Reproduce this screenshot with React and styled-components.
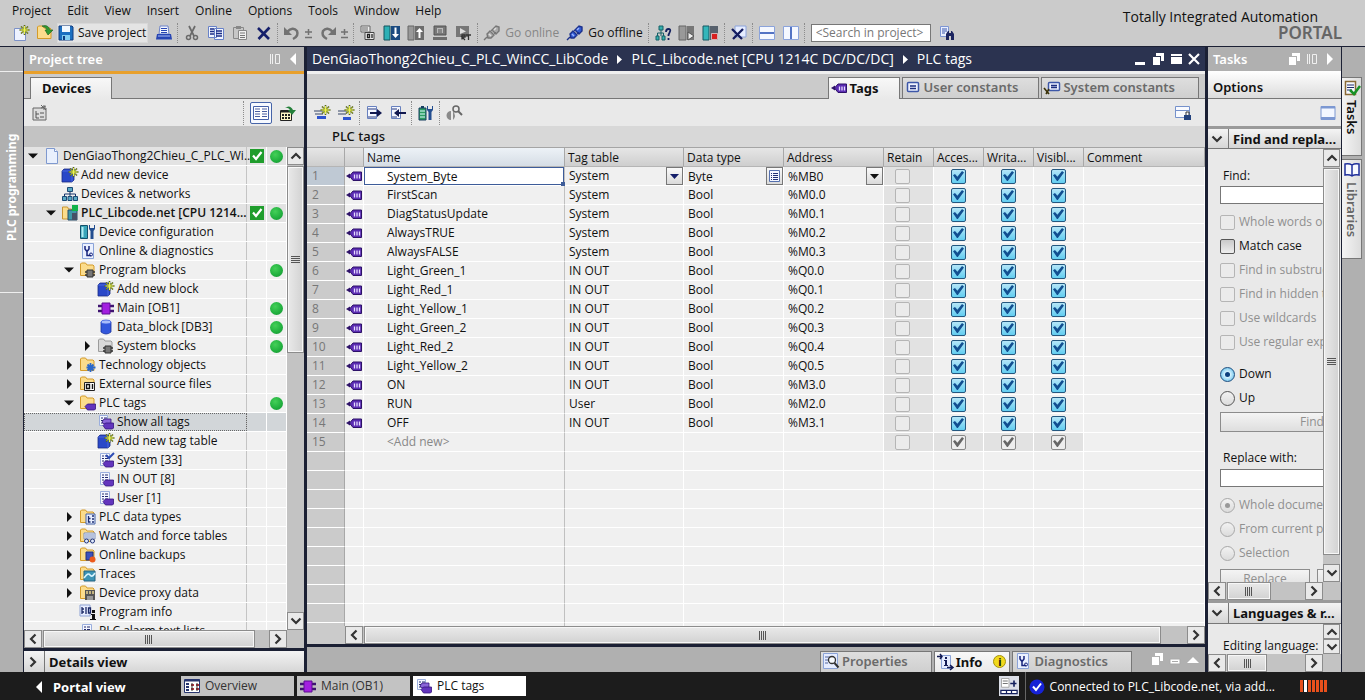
import React from 'react'
import styled, { createGlobalStyle, css } from 'styled-components'

const GlobalStyle = createGlobalStyle`
*{ box-sizing:border-box; }
html, body, #root{ height:100%; }
body{
  margin:0;
  overflow:hidden;
  font-family:"Open Sans","Noto Sans",sans-serif;
  font-size:12px;
  line-height:18px;
  color:#111;
  background:#cbcbcb;
}
button, input, select{ font:inherit; color:inherit; }
`

const metal = 'linear-gradient(#f4f4f4,#e6e6e6 45%,#d6d6d6)'
const headingFont = '"Noto Sans","Open Sans",sans-serif'

// page frame
const Page = styled.div`
display:flex;
flex-direction:column;
height:100vh;
`
const Workspace = styled.main`
flex:1;
min-height:0;
display:flex;
border-top:1px solid #1b2034;
`
const PlainButton = styled.button`
display:flex;
align-items:center;
gap:5px;
padding:0;
border:none;
background:none;
white-space:nowrap;
color:${p => (p.$muted ? '#868686' : 'inherit')};
`

// header: menu, main toolbar and brand
const Header = styled.header`
display:flex;
justify-content:space-between;
height:46px;
background:#cbcbcb;
`
const Menu = styled.nav`
display:flex;
gap:16px;
height:21px;
padding-left:12px;
`
const Toolbar = styled.div`
display:flex;
align-items:center;
gap:8px;
height:25px;
padding:0 0 2px 13px;
`
const Split = styled.span`
width:1px;
height:${p => p.$h || 20}px;
margin:0 -2px 0 -3px;
border-left:1px dotted #8c8c8c;
`
const SaveButton = styled(PlainButton)`
height:20px;
margin-left:-4px;
padding:0 1px 0 0;
gap:4px;
background:#e4e4e4;
border:1px solid #d8d8d8;
`
const SearchBox = styled.input`
width:120px;
height:18px;
padding:0 4px;
border:1px solid #777;
background:#fff;
&::placeholder{ color:#777; opacity:1; }
`
const Brand = styled.div`
display:flex;
flex-direction:column;
align-items:flex-end;
padding:8px 23px 0 0;
`
const BrandName = styled.span`
padding-right:24px;
font-size:14px;
line-height:17px;
font-weight:500;
`
const BrandSub = styled.span`
font-family:${headingFont};
font-size:17px;
line-height:15px;
font-weight:600;
color:#666;
`

// side rails
const LeftRail = styled.aside`
width:24px;
background:#b0b0b0;
border-right:1px solid #1b2034;
padding-top:24px;
`
const LeftRailTab = styled.button`
display:flex;
align-items:center;
justify-content:center;
width:23px;
height:222px;
padding:0 0 10px;
border:solid #eee;
border-width:1px 0;
background:none;
color:#fff;
font-family:${headingFont};
font-weight:700;
writing-mode:vertical-rl;
transform:rotate(180deg);
`
const RightRail = styled.aside`
width:24px;
padding-top:30px;
display:flex;
flex-direction:column;
align-items:flex-start;
gap:3px;
background:#b0b0b0;
border-left:1px solid #1b2034;
`
const RailTab = styled.button`
display:flex;
align-items:center;
gap:4px;
width:20px;
height:${p => p.$h}px;
padding:2px 0;
border:1px solid #777;
border-left:none;
background:linear-gradient(90deg,#f4f4f4,#dcdcdc);
font-family:${headingFont};
font-size:13px;
font-weight:600;
writing-mode:vertical-rl;
color:${p => (p.$active ? '#111' : '#666')};
`

// panels
const TreePanel = styled.section`
width:280px;
display:flex;
flex-direction:column;
background:#c3c3c3;
`
const Gutter = styled.div`
width:3px;
background:#1b2034;
`
const EditorPanel = styled.section`
flex:1;
min-width:0;
display:flex;
flex-direction:column;
background:#f0f0f0;
`
const TaskPanel = styled.section`
width:133px;
display:flex;
flex-direction:column;
background:#e9e9e9;
`
const TitleBar = styled.div`
display:flex;
align-items:center;
gap:2px;
height:${p => (p.$accent ? 27 : 24)}px;
padding:0 3px 0 5px;
color:#fff;
font-family:${headingFont};
font-size:13px;
font-weight:600;
white-space:nowrap;
background:${p => (p.$dark ? '#2b3350' : '#b0b0b0')};
border-bottom:${p => (p.$accent ? '3px solid #e8a02c' : 'none')};
`
const Spacer = styled.span`
flex:1;
`
const TabStrip = styled.div`
display:flex;
align-items:flex-end;
justify-content:${p => (p.$end ? 'flex-end' : 'flex-start')};
gap:2px;
height:${p => (p.$end ? 28 : 25)}px;
padding:0 6px;
background:#cbcbcb;
border-top:${p => (p.$end ? '3px solid #efefef' : 'none')};
border-bottom:1px solid #777;
`
const Tab = styled.button`
display:flex;
align-items:center;
gap:3px;
height:${p => (p.$active ? 22 : 21)}px;
margin-bottom:${p => (p.$active ? -1 : 0)}px;
padding:0 ${p => p.$pad || 20}px 2px ${p => p.$left || 2}px;
border:1px solid #777;
border-bottom:none;
background:${p => (p.$active ? 'linear-gradient(#f8f8f8,#e9e9e9)' : 'linear-gradient(#dedede,#cfcfcf)')};
color:${p => (p.$active ? '#111' : '#6a6a6a')};
font-family:${headingFont};
font-size:13px;
font-weight:${p => (p.$active ? 700 : 600)};
white-space:nowrap;
`
const PanelTools = styled.div`
display:flex;
align-items:center;
gap:8px;
height:27px;
padding:0 ${p => p.$pad || 8}px;
background:#e9e9e9;
`
const ToggleFrame = styled(PlainButton)`
padding:2px;
border:1px solid #4664a8;
border-radius:2px;
background:#f6f9ff;
`
const Caption = styled.h2`
margin:0;
height:22px;
padding-left:25px;
font-family:${headingFont};
font-size:13px;
line-height:20px;
font-weight:500;
background:#d8d8d8;
border-bottom:1px solid #a5a5a5;
`
const SectionHead = styled.button`
display:flex;
align-items:center;
width:100%;
height:${p => p.$h || 21}px;
flex-shrink:0;
padding:0;
border:none;
border-top:${p => (p.$ruled ? '3px solid #9a9a9a' : 'none')};
border-bottom:${p => (p.$ruled ? '1px solid #777' : 'none')};
background:${metal};
font-family:${headingFont};
font-size:13px;
font-weight:700;
white-space:nowrap;
`
const SectionMark = styled.span`
display:flex;
align-items:center;
justify-content:center;
width:21px;
height:100%;
padding-right:2px;
margin-right:4px;
border-right:1px solid #777;
`

// scroll bars
const Bar = styled.div`
display:flex;
flex-direction:${p => (p.$h ? 'row' : 'column')};
${p => (p.$h ? 'height:18px;' : 'width:17px;')}
flex-shrink:0;
min-width:0;
min-height:0;
background:#c3c3c3;
`
const BarButton = styled.button`
display:flex;
align-items:center;
justify-content:center;
flex:0 1 18px;
${p => (p.$h ? 'height:18px;' : 'width:17px;')}
min-width:0;
min-height:0;
padding:0;
border:1px solid #8c8c8c;
background:#e9e9e9;
`
const BarTrack = styled.div`
flex:1;
min-height:0;
padding:${p => (p.$h ? '0 1px' : '1px 0')};
`
const BarThumb = styled.div`
display:flex;
align-items:center;
justify-content:center;
width:100%;
height:100%;
border:1px solid #8c8c8c;
box-shadow:inset 0 0 0 1px #f7f7f7;
background:${p => (p.$h ? 'linear-gradient(#e9e9e9,#d2d2d2)' : 'linear-gradient(90deg,#e9e9e9,#d2d2d2)')};
`

const Chevron = ({ dir, size = 12 }) => {
    const turn = { up: 0, right: 90, down: 180, left: 270 }[dir]
    return (
        <svg width={size} height={size} viewBox="0 0 12 12">
            <path d="M1.5 8.5L6 4l4.500 4.500" transform={`rotate(${turn} 6 6)`} fill="none" stroke="#333" strokeWidth="2.200" />
        </svg>
    )
}

const Scrollbar = ({ horizontal, thumb, label }) => (
    <Bar $h={horizontal}>
        <BarButton $h={horizontal} aria-label={`${label} back`}>
            <Chevron dir={horizontal ? 'left' : 'up'} />
        </BarButton>
        {thumb > 0 && (
            <BarTrack $h={horizontal}>
                <BarThumb $h={horizontal} style={horizontal ? { width: `${thumb}%` } : { height: `${thumb}%` }}>
                    <svg width="9" height="9" viewBox="0 0 9 9">
                        <path d={horizontal ? 'M1.500 0v9M3.500 0v9M5.500 0v9M7.500 0v9' : 'M0 1.500h9M0 3.500h9M0 5.500h9M0 7.500h9'} stroke="#555" />
                    </svg>
                </BarThumb>
            </BarTrack>
        )}
        <BarButton $h={horizontal} aria-label={`${label} forward`}>
            <Chevron dir={horizontal ? 'right' : 'down'} />
        </BarButton>
    </Bar>
)

// icon parts
const Folder = () => (
    <path d="M.5 13.500V2l1-1h4l1.500 2h6l1 1v9.500z" fill="#fbdc8c" stroke="#d49b2a" />
)
const Sheet = () => (
    <>
        <path d="M2.500 1.500h9v12h-9z" fill="#f4f7ff" stroke="#9aaedd" />
        <path d="M4 4h2M4 6.500h2M4 9h2M7 4h3M7 6.500h3M7 9h3" stroke="#232a6e" />
    </>
)
const Star = () => (
    <>
        <path d="M11.500 0v10M6.500 5h10M8 1.500l7 7M15 1.500l-7 7" stroke="#57661a" strokeWidth="1.600" />
        <path d="M11.500 1v8M7.500 5h8M9 2.500l5 5M14 2.500l-5 5" stroke="#eef552" />
    </>
)
const SmallTag = () => (
    <path d="M5 11.500L7.500 9h8v5l-1 1h-7z" fill="#6335bd" stroke="#35147d" strokeWidth=".8" />
)
const Binoculars = () => (
    <path d="M7 15V9l2-3h1v2h2V6h1l2 3v6h-3v-4h-2v4z" fill="#1c2560" />
)
const Wrench = () => (
    <path d="M9 1v4l1.500 2v8h3V7L15 5V1h-1v3h-4V1z" fill="#234e90" />
)
const Chip = ({ x = 6, y = 7 }) => (
    <g transform={`translate(${x} ${y})`}>
        <path d="M0 2h10M0 5h10" stroke="#333" strokeWidth="1.500" />
        <path d="M2 0h6v7H2z" fill="#777" stroke="#333" />
    </g>
)
const Steth = () => (
    <>
        <path d="M2.500.500h11v15h-11z" fill="#eaf0ff" stroke="#8ba3d8" />
        <path d="M5 3v3l2 2.500L9 6V3M7 8v4.500h4" fill="none" stroke="#17237c" strokeWidth="1.500" />
        <circle cx="11" cy="11.500" r="1.500" fill="none" stroke="#17237c" />
    </>
)

const shapes = {
    newProject: <><path d="M1.500 3.500h9l2 3v9h-11z" fill="#eef2ff" stroke="#7d92c8" /><Star /></>,
    openProject: <><Folder /><path d="M5 1q6-2 8 4h3l-5 5-3-5h2Q9 2 5 1z" fill="#2f9a32" stroke="#17601a" strokeWidth=".6" /></>,
    save: <><path d="M1 1h13l1 1v13H1z" fill="#1c6fc0" stroke="#123d80" /><path d="M4 1h8v6H4z" fill="#f1f8ff" /><path d="M4 10h8v5H4z" fill="#83cdf0" /><path d="M5 11h2v4H5z" fill="#123d80" /></>,
    print: <><path d="M4 1h8l1 8H3z" fill="#f4f7ff" stroke="#6d83c9" /><path d="M5 3.500h6M5 5.500h6M5 7.500h6" stroke="#2745b3" /><path d="M1 9h14l1 5.500H0z" fill="#2745b3" /><path d="M2 11h12" stroke="#a9bcf5" /></>,
    cut: <><path d="M5 1l5 10M11 1L6 11" stroke="#6a6a6a" strokeWidth="1.700" /><circle cx="4.500" cy="12.500" r="2" fill="none" stroke="#6a6a6a" strokeWidth="1.500" /><circle cx="11.500" cy="12.500" r="2" fill="none" stroke="#6a6a6a" strokeWidth="1.500" /></>,
    copy: <><path d="M.500 1.500h8v11h-8zM6.500 3.500h9v11h-9z" fill="#f1f5ff" stroke="#6882c8" /><path d="M2 4h4M2 6.500h4M2 9h4M8 6h6M8 8.500h6M8 11h6" stroke="#1b2d87" strokeWidth="1.300" /></>,
    paste: <><path d="M1.500 2.500h10v11h-10z" fill="#c7c7c7" stroke="#888" /><path d="M4 1h5v3H4z" fill="#888" /><path d="M6.500 5.500h8v9h-8z" fill="#f1f1f1" stroke="#888" /><path d="M8 8h5M8 10.500h5M8 12.500h5" stroke="#777" /></>,
    cross: <path d="M2 3l11 11M13.500 2.500L2.500 14" stroke="#151f6b" strokeWidth="2.600" />,
    undo: <><path d="M3 7q6-6 10-1 2 5-4 8" fill="none" stroke="#727272" strokeWidth="2.500" /><path d="M0 2v8h8z" fill="#727272" /></>,
    redo: <><path d="M13 7Q7 1 3 6q-2 5 4 8" fill="none" stroke="#727272" strokeWidth="2.500" /><path d="M16 2v8H8z" fill="#727272" /></>,
    compile: <><path d="M1 1h9v6H1z" fill="#eee" stroke="#666" /><path d="M2 3h6M2 5h6" stroke="#666" /><path d="M5 7.500h9v7H5z" fill="#eee" stroke="#444" /><path d="M7.500 9.500h2v3h-2zM12 9v4" fill="none" stroke="#222" strokeWidth="1.300" /></>,
    download: <><path d="M0 1h6v14H0z" fill="#2db0b5" stroke="#14525d" /><path d="M7 1h9v14H7z" fill="#1b4a80" /><path d="M10.500 2.500h2V9H15l-3.500 4L8 9h2.500z" fill="#fff" /></>,
    upload: <><path d="M0 1h6v14H0z" fill="#999" stroke="#666" /><path d="M7 1h9v14H7z" fill="#6c6c6c" /><path d="M10.500 13h2V7H15l-3.500-4L8 7h2.500z" fill="#fff" /></>,
    simulate: <><path d="M2 1h12v9H2z" fill="#777" stroke="#555" /><path d="M5 3h6v5H5z" fill="#bbb" /><path d="M6 5h4M6 7h4" stroke="#555" /><path d="M1 12h14v3H1z" fill="#6e6e6e" /></>,
    runtime: <><path d="M0 1h13v11H0z" fill="#777" /><path d="M4 3l6 3.500L4 9z" fill="#ddd" /><path d="M6 14.500V10h3v2H6l3 3M10 10h5M12.500 10v5" fill="none" stroke="#333" strokeWidth="1.300" /></>,
    plug: <><path d="M0 15l3-3M3 9l3-3 4 4-3 3H4zM8 5l4-4 3 1v4l-3 3z" fill="#315bd2" stroke="#1c318c" strokeWidth="1.400" /><path d="M5 9l2 2M10 5l2-2" stroke="#9cb4ff" strokeWidth="1.500" /><path d="M6 7l3-3M9 10l3-3" stroke="#1c318c" /></>,
    plugOff: <><path d="M0 15l3-3M3 9l3-3 4 4-3 3H4zM8 5l4-4 3 1v4l-3 3z" fill="#aaa" stroke="#777" strokeWidth="1.400" /><path d="M5 9l2 2M10 5l2-2" stroke="#ddd" strokeWidth="1.500" /><path d="M6 7l3-3M9 10l3-3" stroke="#777" /></>,
    access: <><path d="M4 1h4v4H4zM1 11h3v4H1zM7 11h3v4H7z" fill="#35b0ae" stroke="#176067" /><path d="M6 5v6M2.500 11V8h6v3" fill="none" stroke="#176067" /><path d="M11 7q0-3 2.500-3T15 6.500 13.500 10v1M13.500 13v2" fill="none" stroke="#14205e" strokeWidth="1.800" /></>,
    startCpu: <><path d="M0 1h7v14H0z" fill="#999" stroke="#666" /><path d="M8 1h7v14H8z" fill="#777" /><path d="M9 7l6 4-6 4z" fill="#eee" stroke="#555" /></>,
    stopCpu: <><path d="M0 1h6v14H0z" fill="#34b6ba" stroke="#145862" /><path d="M7 1h8v14H7z" fill="#57616d" /><path d="M8.500 8.500h6v6h-6z" fill="#d81f1f" stroke="#fff" strokeWidth=".6" /></>,
    crossRef: <><path d="M4 1h11v11H4z" fill="#e5ecff" stroke="#8ca3db" /><path d="M1 4l10 10M12 4L2 14" stroke="#131b5f" strokeWidth="2.300" /></>,
    splitH: <><path d="M.500 1.500h15v13H.500z" fill="#f5f8ff" stroke="#8ba3db" /><path d="M1 8h14" stroke="#5373c4" strokeWidth="2" /></>,
    splitV: <><path d="M.500 1.500h15v13H.500z" fill="#f5f8ff" stroke="#8ba3db" /><path d="M8 2v12" stroke="#5373c4" strokeWidth="2" /></>,
    searchProject: <><path d="M1.500 1.500h8v10h-8z" fill="#eaf0ff" stroke="#7d95d4" /><path d="M3 4h5M3 6h5M3 8h3" stroke="#3b57ac" /><Binoculars /></>,
    treeNew: <><path d="M1 3h13v12H1z" fill="#ddd" stroke="#666" /><path d="M4 6v7h3M4 9h3M8 8h4M8 12h4" stroke="#555" fill="none" /><path d="M9 3l5-2M12 0v5M9 0l5 5" stroke="#666" /></>,
    listView: <><path d="M.500 1.500h15v13H.500z" fill="#fff" stroke="#4560a8" /><path d="M2 4h5M2 6.500h5M2 9h5M2 11.500h5M9 4h5M9 6.500h5M9 9h5M9 11.500h5" stroke="#4a5ea0" /></>,
    exportView: <><path d="M.500 5.500h11v10H.500z" fill="#fff6c5" stroke="#222" /><path d="M1 6.500h10" stroke="#222" strokeWidth="2" /><path d="M2 9h2v2H2zM5 9h2v2H5zM8 9h2v2H8zM2 12h2v2H2zM5 12h2v2H5zM8 12h2v2H8z" fill="#222" /><path d="M5 3q5-4 8 2h3l-4 5-4-5h2Q8 2 5 3z" fill="#25803a" /></>,
    project: <><path d="M2.500.500h8l3 3v12h-11z" fill="#e9f0fd" stroke="#7f99cf" /><path d="M10.500.500v3h3" fill="#fff" stroke="#7f99cf" /></>,
    addNew: <><path d="M0 4l2-2h10v11l-2 2H0z" fill="#2a48c8" stroke="#1b2b85" strokeWidth=".8" /><path d="M0 4h10v11M10 4l2-2" fill="none" stroke="#5a78e8" strokeWidth=".7" /><Star /></>,
    network: <><path d="M5.500 1.500h5v4h-5zM.500 10.500h4v4h-4zM6 10.500h4v4H6zM11.500 10.500h4v4h-4z" fill="#5ba9c4" stroke="#1b4a76" /><path d="M8 6v4M2.500 10V8h11v2" fill="none" stroke="#17346b" /></>,
    plc: <><path d="M.500 14V2h5l1 2h3v10z" fill="#fbdc8c" stroke="#c99531" /><path d="M6 5h9v10H6z" fill="#3d97a7" stroke="#284d68" /><path d="M10 8h5v7h-5z" fill="#455066" /><path d="M10 0h6v6h-6z" fill="#12b24a" /></>,
    deviceConfig: <><path d="M.500 1.500h7v13h-7z" fill="#39a5b9" stroke="#14516b" /><path d="M2.500 3v10" stroke="#b4edf2" strokeWidth="2" /><Wrench /></>,
    steth: <Steth />,
    blocks: <><Folder /><Chip x={5} y={8} /></>,
    systemBlocks: <><path d="M.500 13.500V2l1-1h4l1.500 2h6l1 1v9.500z" fill="#d9d9d9" stroke="#9c9c9c" /><Chip x={5} y={8} /></>,
    ob: <><path d="M0 6h16M0 11h16" stroke="#3e1470" strokeWidth="2.400" /><path d="M4 3h8v11H4z" fill="#a31fe0" stroke="#5c0f92" /></>,
    db: <><path d="M3 3v10q5 4 10 0V3z" fill="#3357dc" stroke="#1b33a0" strokeWidth=".8" /><ellipse cx="8" cy="3" rx="5" ry="2" fill="#a9bcfa" stroke="#3357dc" strokeWidth=".8" /></>,
    tech: <><Folder /><path d="M10.500 6v9M6.500 10.500h9M7.500 7.500l6 6M13.500 7.500l-6 6" stroke="#2a68cb" strokeWidth="1.800" /></>,
    source: <><Folder /><path d="M4.500 6.500h10v8h-10z" fill="#fff" stroke="#222" /><path d="M6.500 8.500h3v4h-3zM12.500 8v5" fill="none" stroke="#111" strokeWidth="1.400" /></>,
    tagsFolder: <><Folder /><SmallTag /></>,
    allTags: <><path d="M1.500 1.500h8v10h-8z" fill="#f4f7ff" stroke="#9aaedd" /><path d="M3 4h2M3 6.500h2M3 9h2M6 4h3" stroke="#232a6e" /><path d="M4 8l2-3h7v5H6z" fill="#8a65d8" stroke="#35147d" strokeWidth=".8" /><SmallTag /></>,
    tagTable: <><Sheet /><SmallTag /></>,
    tagTableMain: <><Sheet /><path d="M8 3l3 3 5-5" fill="none" stroke="#2d4bb4" strokeWidth="2" /><SmallTag /></>,
    dataTypes: <><Folder /><path d="M6 5h9v10H6z" fill="#e8efff" stroke="#4562a6" /><path d="M8.500 7v6h2M8.500 9.500h2M12 7h2M12 10h2M12 13h2" fill="none" stroke="#1c2d70" strokeWidth="1.300" /></>,
    watch: <><Folder /><path d="M4 5h11v6H4z" fill="#f0f4ff" stroke="#7d8fbb" /><path d="M5 7h9M5 9h9" stroke="#7d8fbb" /><circle cx="6.500" cy="13" r="2" fill="#dfeaff" stroke="#23367d" /><circle cx="12.500" cy="13" r="2" fill="#dfeaff" stroke="#23367d" /></>,
    backup: <><Folder /><path d="M6 5h7v8H6z" fill="#3b50be" stroke="#222f7a" /><circle cx="12.500" cy="12.500" r="3" fill="#ec5a1c" /></>,
    traces: <><Folder /><path d="M4 5h11v10H4z" fill="#3b93b5" stroke="#256281" /><path d="M4 12q4-6 6-3t5-2" fill="none" stroke="#d6f4ff" strokeWidth="1.500" /></>,
    proxy: <><Folder /><path d="M5 5h10v10H5z" fill="#555" /><path d="M7 6v3M10 6v3M13 6v3" stroke="#e7d28f" strokeWidth="1.500" /><path d="M7 11h6v4H7z" fill="#999" /></>,
    programInfo: <><path d="M0 1h10v11H0z" fill="#e7edff" stroke="#8fa3d4" /><path d="M2 3v7M2 5h2M2 8h2M6 3v7M8.500 4h2v5h-2z" fill="none" stroke="#1b2866" strokeWidth="1.300" /><path d="M12 6h3v3h-3zM11 10h4v5h1v1h-6v-1h2v-4h-1z" fill="#111" /></>,
    tag: <><path d="M3.500 8L7 4h8.500v8.500H7z" fill="#5b2cb3" stroke="#2d1168" /><path d="M0 8l4-2.500v5z" fill="#2d1168" /><path d="M8.500 6.500v4M11 6.500v4M13.500 6.500v4" stroke="#e6dcff" strokeWidth="1.300" /></>,
    userConst: <><rect x="2.500" y="3.500" width="11" height="9" rx="1" fill="#eef2ff" stroke="#3d57a8" strokeWidth="1.500" /><path d="M5 7h6M5 9.500h6" stroke="#1d2f80" strokeWidth="1.400" /></>,
    systemConst: <><rect x="4.500" y="3.500" width="11" height="8" rx="1" fill="#eef2ff" stroke="#3d57a8" strokeWidth="1.500" /><path d="M7 6.500h6M7 8.500h6" stroke="#1d2f80" strokeWidth="1.400" /><path d="M0 9l5 6M5 10l-3 5" stroke="#3a3108" strokeWidth="1.600" /></>,
    rowInsert: <><path d="M0 6h9M1 9h8" stroke="#8f97a8" strokeWidth="2" /><path d="M3 12.500h9" stroke="#2f55cf" strokeWidth="3" /><Star /></>,
    rowAdd: <><path d="M0 6h9M0 9h8" stroke="#8f97a8" strokeWidth="2" /><path d="M5 13.500h8" stroke="#2f55cf" strokeWidth="3" /><Star /></>,
    exportTags: <><path d="M1.500 1.500h9v12h-9z" fill="#f4f7ff" stroke="#6881bf" /><path d="M2 4h8M2 12h8" stroke="#27397f" /><path d="M4 8h8" stroke="#11184f" strokeWidth="2" /><path d="M11 4l5 4-5 4z" fill="#11184f" /></>,
    importTags: <><path d="M1.500 1.500h9v12h-9z" fill="#f4f7ff" stroke="#6881bf" /><path d="M2 4h5M2 12h5" stroke="#27397f" /><path d="M8 8h8" stroke="#11184f" strokeWidth="2" /><path d="M9 4L4 8l5 4z" fill="#11184f" /></>,
    monitor: <><path d="M1 3h7v12H1z" fill="#2c9d62" stroke="#173f61" /><path d="M3 1h3v2H3z" fill="#173f61" /><path d="M2 6h5M2 9h5M2 12h5" stroke="#dff" /><Wrench /></>,
    observe: <><circle cx="10" cy="4" r="3" fill="none" stroke="#666" strokeWidth="1.500" /><path d="M12 6l4 4" stroke="#666" strokeWidth="2" /><path d="M5 6a4 4 0 000 9zM7 6v9q4-4 0-9" fill="#8b8b8b" /></>,
    lockPane: <><path d="M.500 1.500h14v11H.500z" fill="#f8faff" stroke="#7591cb" /><path d="M1 5.500h13" stroke="#7591cb" /><path d="M9 10h7v5H9z" fill="#23427e" /><path d="M11 10V7h3v3" fill="none" stroke="#333" /></>,
    pane: <><path d="M1 1.500h14v13H1z" fill="#f3f7ff" stroke="#7c98d2" /><path d="M1 2.500h14M1 13h14" stroke="#7c98d2" strokeWidth="2" /></>,
    taskTab: <><path d="M1.500 1.500h10v13h-10z" fill="#f6f8ff" stroke="#8a6a36" strokeWidth="1.500" /><path d="M3 5h7M3 7.500h7M3 10h5" stroke="#202b68" strokeWidth="1.200" /><path d="M6 10l4 4 6-8" fill="none" stroke="#189226" strokeWidth="2.500" /></>,
    book: <path d="M1 2q4-1 7 1 3-2 7-1v11q-4-1-7 1-3-2-7-1zM8 3v11" fill="#f7f9ff" stroke="#1f2f9b" strokeWidth="1.500" />,
    properties: <><path d="M.500.500h14v15H.500z" fill="#e5ecff" stroke="#8ba3d8" /><path d="M2 4h5M2 7h3M2 10h3" stroke="#55679d" /><circle cx="9" cy="7" r="3.500" fill="#f8fbff" stroke="#333" strokeWidth="1.300" /><path d="M11.500 10l4 4.500" stroke="#333" strokeWidth="2" /></>,
    info: <><path d="M4.500 1.500h9v13h-9z" fill="#e5ecff" stroke="#8ba3d8" /><path d="M0 2.500h5M3 0l2 2.500L3 5M10 13.500h6M13 11l3 2.500-3 2.500" fill="none" stroke="#131b55" strokeWidth="1.500" /><path d="M8 3h2v2H8zM7 6h3v5h1v1H7v-1h1V7H7z" fill="#131b55" /></>,
    overview: <><path d="M.500 1.500h15v13H.500z" fill="#fff" stroke="#27356e" /><path d="M1 2.500h15M2 6h3M2 9h3M2 12h3" stroke="#27356e" strokeWidth="2" /><path d="M7 7h3M12 7h3M7 11h3M12 11h3" stroke="#b5323d" strokeWidth="2" /><path d="M8 5v8M13 5v8" stroke="#333" /></>,
    netStatus: <><path d="M0 0h16v16H0z" fill="#dcdfe8" /><path d="M2 2h6v7H2z" fill="#fff" stroke="#aaa" strokeWidth=".8" /><path d="M3 4h4M3 6h4" stroke="#777" strokeWidth=".8" /><path d="M9 6h5M12 3.500v5" stroke="#14205e" strokeWidth="1.300" /><path d="M1.500 11.500h13v2.500h-13zM6 11.500v2.500M10 11.500v2.500" fill="#fff" stroke="#14205e" /></>,
    okBlue: <><circle cx="8" cy="8" r="7.500" fill="#1622d6" /><path d="M4 7.500l3 3.500 5-6.500" fill="none" stroke="#fff" strokeWidth="2" /></>,
    minimize: <path d="M3 11h10v3H3z" fill="#fff" />,
    smallBar: <path d="M3 8h10v5H3zM5 10.500h6" fill="#fff" stroke="#aaa" />,
    restore: <><path d="M6 2h8v8h-3V5H6z" fill="#fff" /><path d="M3 6h7v8H3z" fill="#fff" /></>,
    maximize: <path d="M3 3h11v2H3zM3 6h11v7H3z" fill="#fff" />,
    close: <path d="M3 3l10 10M13 3L3 13" stroke="#fff" strokeWidth="2.200" />,
    columns: <path d="M3.500 3v10M5.500 3v10M8.500 3.500h4v9h-4z" fill="none" stroke="#f0f0f0" />,
    triLeft: <path d="M11 2v12L5 8z" fill="#fff" />,
    triRight: <path d="M5 2v12l6-6z" fill="#fff" />,
    triUp: <path d="M2 12h12L8 6z" fill="#fff" />,
}

const Icon = ({ name, size = 16 }) => (
    <svg width={size} height={size} viewBox="0 0 16 16" aria-hidden="true" overflow="visible">
        {shapes[name]}
    </svg>
)

const IconButton = ({ name, label }) => (
    <PlainButton aria-label={label || name}><Icon name={name} /></PlainButton>
)

// project tree
const TreeArea = styled.div`
flex:1;
min-height:0;
margin-top:21px;
display:flex;
`
const TreeList = styled.ul`
flex:1;
min-width:0;
margin:0;
padding:0;
list-style:none;
overflow:hidden;
background:#f0f0f0;
`
const TreeRow = styled.li`
display:grid;
grid-template-columns:minmax(0,1fr) 20px 20px;
height:19px;
background:${p => (p.$selected ? '#d2d6d9' : p.$root ? '#e3e3e3' : '#f0f0f0')};
border-bottom:1px solid #fff;
`
const TreeName = styled.span`
display:flex;
align-items:center;
gap:3px;
padding-left:${p => 4 + p.$level * 18}px;
white-space:nowrap;
font-weight:${p => (p.$bold ? 600 : 400)};
border-right:1px solid #c4c4c4;
${p => p.$selected && css`outline:1px dotted #666; outline-offset:-1px;`}
svg{ flex-shrink:0; }
`
const Toggle = styled.span`
display:flex;
width:13px;
flex-shrink:0;
`
const StatusCell = styled.span`
display:flex;
align-items:center;
justify-content:center;
border-right:1px solid #fff;
`
const GreenDot = styled.span`
width:13px;
height:13px;
border-radius:50%;
background:radial-gradient(circle at 40% 35%,#44d058,#1fae3d 60%,#168a30);
`
const TreeFoot = styled.div`
display:grid;
grid-template-columns:minmax(0,1fr) 17px;
border-bottom:3px solid #1b2034;
`

const tree = [
    { level: 0, open: true, icon: 'project', text: 'DenGiaoThong2Chieu_C_PLC_Wi...', check: true, dot: true, root: true },
    { level: 1, icon: 'addNew', text: 'Add new device' },
    { level: 1, icon: 'network', text: 'Devices & networks' },
    { level: 1, open: true, icon: 'plc', text: 'PLC_Libcode.net [CPU 1214...', check: true, dot: true, root: true, bold: true },
    { level: 2, icon: 'deviceConfig', text: 'Device configuration' },
    { level: 2, icon: 'steth', text: 'Online & diagnostics' },
    { level: 2, open: true, icon: 'blocks', text: 'Program blocks', dot: true },
    { level: 3, icon: 'addNew', text: 'Add new block' },
    { level: 3, icon: 'ob', text: 'Main [OB1]', dot: true },
    { level: 3, icon: 'db', text: 'Data_block [DB3]', dot: true },
    { level: 3, open: false, icon: 'systemBlocks', text: 'System blocks', dot: true },
    { level: 2, open: false, icon: 'tech', text: 'Technology objects' },
    { level: 2, open: false, icon: 'source', text: 'External source files' },
    { level: 2, open: true, icon: 'tagsFolder', text: 'PLC tags', dot: true },
    { level: 3, icon: 'allTags', text: 'Show all tags', selected: true },
    { level: 3, icon: 'addNew', text: 'Add new tag table' },
    { level: 3, icon: 'tagTableMain', text: 'System [33]' },
    { level: 3, icon: 'tagTable', text: 'IN OUT [8]' },
    { level: 3, icon: 'tagTable', text: 'User [1]' },
    { level: 2, open: false, icon: 'dataTypes', text: 'PLC data types' },
    { level: 2, open: false, icon: 'watch', text: 'Watch and force tables' },
    { level: 2, open: false, icon: 'backup', text: 'Online backups' },
    { level: 2, open: false, icon: 'traces', text: 'Traces' },
    { level: 2, open: false, icon: 'proxy', text: 'Device proxy data' },
    { level: 2, icon: 'programInfo', text: 'Program info' },
    { level: 2, icon: 'tagTable', text: 'PLC alarm text lists' },
]

const ProjectTree = () => (
    <TreePanel>
        <TitleBar $accent>
            Project tree
            <Spacer />
            <Icon name="columns" />
            <Icon name="triLeft" />
        </TitleBar>
        <TabStrip>
            <Tab $active $left={11} $pad={20}>Devices</Tab>
        </TabStrip>
        <PanelTools>
            <IconButton name="treeNew" label="New group" />
            <Spacer />
            <Split $h={24} />
            <ToggleFrame aria-label="Show list view"><Icon name="listView" /></ToggleFrame>
            <IconButton name="exportView" label="Open in editor" />
        </PanelTools>
        <TreeArea>
            <TreeList>
                {tree.map(item => (
                    <TreeRow key={item.text} $root={item.root} $selected={item.selected}>
                        <TreeName $level={item.level} $bold={item.bold} $selected={item.selected}>
                            <Toggle>
                                {item.open !== undefined && (
                                    <svg width="10" height="10" viewBox="0 0 10 10">
                                        <path d={item.open ? 'M0 2.500h10L5 7.500z' : 'M3 0v10l5-5z'} fill="#111" />
                                    </svg>
                                )}
                            </Toggle>
                            <Icon name={item.icon} />
                            {item.text}
                        </TreeName>
                        <StatusCell>
                            {item.check && (
                                <svg width="14" height="14" viewBox="0 0 14 14">
                                    <path d="M0 0h14v14H0z" fill="#1f9d2c" />
                                    <path d="M3 6.500L6 10l5.500-7" fill="none" stroke="#fff" strokeWidth="2.200" />
                                </svg>
                            )}
                        </StatusCell>
                        <StatusCell>{item.dot && <GreenDot />}</StatusCell>
                    </TreeRow>
                ))}
            </TreeList>
            <Scrollbar thumb={42} label="Tree rows" />
        </TreeArea>
        <TreeFoot>
            <Scrollbar horizontal thumb={94} label="Tree columns" />
        </TreeFoot>
        <SectionHead>
            <SectionMark><Chevron dir="right" /></SectionMark>
            Details view
        </SectionHead>
    </TreePanel>
)

// tag table
const TableArea = styled.div`
flex:1;
min-height:0;
overflow:hidden;
`
const Table = styled.table`
width:100%;
table-layout:fixed;
border-collapse:separate;
border-spacing:0;
`
const Th = styled.th`
height:19px;
padding:0 0 0 3px;
text-align:left;
font-weight:400;
line-height:17px;
white-space:nowrap;
overflow:hidden;
background:${p => (p.$sorted ? 'linear-gradient(#edf2f7,#d5dde5)' : 'linear-gradient(#e6e6e6,#cecece)')};
border-right:1px solid #a8a8a8;
border-bottom:1px solid #b5b5b5;
`
const Td = styled.td`
height:19px;
padding:0 0 0 ${p => (p.$indent ? 23 : 4)}px;
line-height:16px;
white-space:nowrap;
background:${p => (p.$shade ? '#e2e2e2' : '#f0f0f0')};
border-right:1px solid ${p => (p.$line ? '#c0c0c0' : '#fff')};
border-bottom:1px solid #fff;
color:${p => (p.$muted ? '#888' : '#111')};
`
const NumberCell = styled(Td)`
padding-left:5px;
background:${p => (p.$current ? '#bfc9d4' : '#cbcbcb')};
border-right-color:#a8a8a8;
color:#777;
`
const IconCell = styled(Td)`
padding:0 1px;
svg{ display:block; }
`
const CheckCell = styled(Td)`
padding:0;
`
const EditCell = styled(Td)`
padding:0;
`
const NameInput = styled.input`
display:block;
width:100%;
height:18px;
padding:0 0 0 22px;
border:1px solid #3d5c99;
outline:none;
background:#fff;
`
const NameHolder = styled.div`
position:relative;
&::after{
  content:"";
  position:absolute;
  right:-1px;
  bottom:-1px;
  width:4px;
  height:4px;
  background:#3d5c99;
}
`
const FieldRow = styled.div`
display:flex;
align-items:center;
padding-left:4px;
`
const fieldLook = css`
flex:1;
min-width:0;
height:17px;
padding:0;
border:none;
outline:none;
background:none;
`
const CellInput = styled.input`${fieldLook}`
const CellSelect = styled.select`
${fieldLook}
appearance:none;
`
const CellButton = styled.span`
display:flex;
align-items:center;
justify-content:center;
width:17px;
height:18px;
border:1px solid #777;
background:linear-gradient(#fafafa,#dadada);
pointer-events:none;
`
const Check = styled.input`
appearance:none;
display:grid;
place-content:center;
flex-shrink:0;
width:15px;
height:15px;
margin:${p => (p.$cell ? '0 auto' : '0')};
border:1px solid ${p => (p.disabled ? '#b5b5b5' : '#555')};
border-radius:2px;
background:${p => (p.disabled ? '#ebebeb' : 'linear-gradient(#c9c9c9,#eeeeee)')};
&:checked{
  border-color:#24577f;
  background:linear-gradient(#b5e6f8,#62cdf0);
}
&:checked::before{
  content:"";
  width:11px;
  height:10px;
  background:#124f91;
  clip-path:polygon(0 42%,18% 30%,40% 58%,82% 0,100% 14%,44% 100%,36% 100%);
}
${p => p.$grey && css`
&:checked{ border-color:#888; background:#ededed; }
&:checked::before{ background:#666; }
`}
`

const DownMark = ({ color }) => (
    <svg width="9" height="5" viewBox="0 0 9 5"><path d="M0 0h9L4.500 5z" fill={color} /></svg>
)

const tags = [
    ['System_Byte', 'System', 'Byte', '%MB0'],
    ['FirstScan', 'System', 'Bool', '%M0.0'],
    ['DiagStatusUpdate', 'System', 'Bool', '%M0.1'],
    ['AlwaysTRUE', 'System', 'Bool', '%M0.2'],
    ['AlwaysFALSE', 'System', 'Bool', '%M0.3'],
    ['Light_Green_1', 'IN OUT', 'Bool', '%Q0.0'],
    ['Light_Red_1', 'IN OUT', 'Bool', '%Q0.1'],
    ['Light_Yellow_1', 'IN OUT', 'Bool', '%Q0.2'],
    ['Light_Green_2', 'IN OUT', 'Bool', '%Q0.3'],
    ['Light_Red_2', 'IN OUT', 'Bool', '%Q0.4'],
    ['Light_Yellow_2', 'IN OUT', 'Bool', '%Q0.5'],
    ['ON', 'IN OUT', 'Bool', '%M3.0'],
    ['RUN', 'User', 'Bool', '%M2.0'],
    ['OFF', 'IN OUT', 'Bool', '%M3.1'],
]
const columns = [38, 19, 201, 119, 100, 100, 50, 50, 50, 50]
const access = ['Accessible', 'Writable', 'Visible']
const blankRows = Array.from({ length: 10 }, (_, i) => i)

const TagRow = ({ tag, index }) => {
    const [name, table, type, address] = tag
    const editing = index === 0
    return (
        <tr>
            <NumberCell $current={editing}>{index + 1}</NumberCell>
            <IconCell><Icon name="tag" /></IconCell>
            {editing ? (
                <>
                    <EditCell $line>
                        <NameHolder><NameInput aria-label="Name" defaultValue={name} /></NameHolder>
                    </EditCell>
                    <EditCell>
                        <FieldRow>
                            <CellSelect aria-label="Tag table" defaultValue={table}>
                                <option>System</option>
                                <option>IN OUT</option>
                                <option>User</option>
                            </CellSelect>
                            <CellButton><DownMark color="#151f6b" /></CellButton>
                        </FieldRow>
                    </EditCell>
                    <EditCell>
                        <FieldRow>
                            <CellInput aria-label="Data type" defaultValue={type} />
                            <CellButton>
                                <svg width="11" height="12" viewBox="0 0 11 12">
                                    <path d="M.500.500h10v11H.500z" fill="#f3f6ff" stroke="#5570ae" />
                                    <path d="M2 3.500h1M4 3.500h5M2 5.500h1M4 5.500h5M2 7.500h1M4 7.500h5M2 9.500h1M4 9.500h5" stroke="#1f2f74" />
                                </svg>
                            </CellButton>
                        </FieldRow>
                    </EditCell>
                    <EditCell>
                        <FieldRow>
                            <CellInput aria-label="Address" defaultValue={address} />
                            <CellButton><DownMark color="#111" /></CellButton>
                        </FieldRow>
                    </EditCell>
                </>
            ) : (
                <>
                    <Td $indent $line>{name}</Td>
                    <Td>{table}</Td>
                    <Td>{type}</Td>
                    <Td>{address}</Td>
                </>
            )}
            <RetainCell name={name} />
            {access.map(a => (
                <CheckCell key={a}><Check $cell type="checkbox" defaultChecked aria-label={`${a} ${name}`} /></CheckCell>
            ))}
            <Td />
        </tr>
    )
}

const RetainTd = styled(CheckCell)`
padding-right:12px;
`
const RetainCell = ({ name }) => (
    <RetainTd $shade><Check $cell type="checkbox" disabled aria-label={`Retain ${name}`} /></RetainTd>
)

const Breadcrumb = styled.span`
display:flex;
align-items:center;
gap:9px;
font-family:"Open Sans","Noto Sans",sans-serif;
font-size:14px;
font-weight:500;
`
const EditorFoot = styled.div`
display:grid;
grid-template-columns:38px minmax(0,1fr);
background:#cbcbcb;
border-bottom:3px solid #1b2034;
`
const Inspector = styled.div`
display:flex;
align-items:flex-end;
justify-content:flex-end;
gap:2px;
height:25px;
padding-right:4px;
background:#b0b0b0;
overflow:hidden;
`
const InfoBadge = styled.span`
width:13px;
height:13px;
margin-left:8px;
border-radius:50%;
background:#f1d91c;
border:1px solid #a5920e;
font-size:11px;
line-height:11px;
text-align:center;
`
const WindowTools = styled.span`
display:flex;
gap:2px;
height:21px;
padding-left:15px;
`
const RightTool = styled.span`
padding-right:7px;
`
const WindowGroup = styled.span`
display:flex;
gap:2px;
`

const Crumb = () => (
    <svg width="5" height="9" viewBox="0 0 5 9"><path d="M0 0v9l5-4.500z" fill="#fff" /></svg>
)

const Editor = () => (
    <EditorPanel>
        <TitleBar $dark>
            <Breadcrumb>
                DenGiaoThong2Chieu_C_PLC_WinCC_LibCode <Crumb />
                PLC_Libcode.net [CPU 1214C DC/DC/DC] <Crumb />
                PLC tags
            </Breadcrumb>
            <Spacer />
            <WindowGroup>
                <IconButton name="minimize" />
                <IconButton name="restore" />
                <IconButton name="maximize" />
                <IconButton name="close" />
            </WindowGroup>
        </TitleBar>
        <TabStrip $end>
            <Tab $active><Icon name="tag" />Tags</Tab>
            <Tab><Icon name="userConst" />User constants</Tab>
            <Tab $pad={23}><Icon name="systemConst" />System constants</Tab>
        </TabStrip>
        <PanelTools $pad={7}>
            <IconButton name="rowInsert" label="Insert row" />
            <IconButton name="rowAdd" label="Add row" />
            <Split $h={24} />
            <IconButton name="exportTags" label="Export" />
            <IconButton name="importTags" label="Import" />
            <Split $h={24} />
            <IconButton name="monitor" label="Configure" />
            <Split $h={24} />
            <IconButton name="observe" label="Monitor all" />
            <Spacer />
            <RightTool><IconButton name="lockPane" label="Keep layout" /></RightTool>
        </PanelTools>
        <Caption>PLC tags</Caption>
        <TableArea>
            <Table>
                <colgroup>
                    {columns.map((w, i) => <col key={i} width={w} />)}
                    <col />
                </colgroup>
                <thead>
                    <tr>
                        <Th /><Th />
                        <Th $sorted>Name</Th>
                        <Th>Tag table</Th>
                        <Th>Data type</Th>
                        <Th>Address</Th>
                        <Th>Retain</Th>
                        <Th>Acces...</Th>
                        <Th>Writa...</Th>
                        <Th>Visibl...</Th>
                        <Th>Comment</Th>
                    </tr>
                </thead>
                <tbody>
                    {tags.map((tag, i) => <TagRow key={tag[0]} tag={tag} index={i} />)}
                    <tr>
                        <NumberCell>15</NumberCell>
                        <Td />
                        <Td $indent $line $muted>&lt;Add new&gt;</Td>
                        <Td /><Td /><Td />
                        <RetainCell name="new tag" />
                        {access.map(a => (
                            <CheckCell key={a} $shade><Check $cell type="checkbox" $grey defaultChecked aria-label={`${a} new tag`} /></CheckCell>
                        ))}
                        <Td />
                    </tr>
                    {blankRows.map(r => (
                        <tr key={r}>
                            <NumberCell />
                            <Td />
                            <Td $line />
                            <Td /><Td /><Td /><Td /><Td /><Td /><Td /><Td />
                        </tr>
                    ))}
                </tbody>
            </Table>
        </TableArea>
        <EditorFoot>
            <span />
            <Scrollbar horizontal thumb={97} label="Table columns" />
        </EditorFoot>
        <Inspector>
            <Tab $pad={23}><Icon name="properties" />Properties</Tab>
            <Tab $active $pad={3}><Icon name="info" />Info<InfoBadge>i</InfoBadge></Tab>
            <Tab $pad={23}><Icon name="steth" />Diagnostics</Tab>
            <WindowTools>
                <Icon name="restore" />
                <Icon name="smallBar" />
                <Icon name="triUp" />
            </WindowTools>
        </Inspector>
    </EditorPanel>
)

// tasks panel
const OptionsHead = styled.h2`
margin:0;
height:28px;
padding:4px 5px 0;
font-family:${headingFont};
font-size:13px;
line-height:24px;
font-weight:600;
background:linear-gradient(#fff,#dcdcdc);
border-bottom:1px solid #777;
`
const TaskBody = styled.div`
flex:${p => (p.$short ? '0 0 30px' : '1')};
min-height:0;
display:grid;
grid-template-columns:minmax(0,1fr) 18px;
grid-template-rows:minmax(0,1fr);
overflow:hidden;
`
const TaskClip = styled.div`
min-height:0;
overflow:hidden;
`
const FindForm = styled.form`
display:flex;
flex-direction:column;
width:196px;
padding:18px 0 0 12px;
`
const FieldLabel = styled.label`
padding:0 0 1px 3px;
`
const TextField = styled.input`
width:100%;
height:18px;
padding:0 3px;
border:1px solid #777;
background:#fff;
margin-bottom:6px;
`
const Choice = styled.label`
display:flex;
align-items:center;
gap:4px;
height:24px;
white-space:nowrap;
color:${p => (p.$off ? '#909090' : '#111')};
`
const ChoiceGroup = styled.div`
padding:${p => (p.$spaced ? '8px 0 2px' : '0')};
`
const Radio = styled.input`
appearance:none;
display:inline-grid;
place-content:center;
width:15px;
height:15px;
margin:0;
border-radius:50%;
border:1px solid ${p => (p.disabled ? '#a8a8a8' : '#555')};
background:linear-gradient(#f2f2f2,#dcdcdc);
&:checked::before{
  content:"";
  width:5px;
  height:5px;
  border-radius:50%;
  background:${p => (p.disabled ? '#999' : '#0c3f7e')};
}
&:checked:enabled{
  border-color:#1c4e80;
  background:radial-gradient(#d5f3ff 30%,#4ab2e4);
}
`
const FormButton = styled.button`
height:20px;
flex:${p => (p.$grow ? '0 0 90px' : 'none')};
padding:0;
border:1px solid #8c8c8c;
background:linear-gradient(#f4f4f4,#dedede);
color:#909090;
`
const ButtonRow = styled.div`
display:flex;
gap:7px;
padding-top:4px;
`
const ReplaceLabel = styled(FieldLabel)`
padding-top:17px;
padding-bottom:2px;
`
const LanguageText = styled.p`
margin:0;
padding:14px 0 0 15px;
line-height:16px;
white-space:nowrap;
`
const TaskFoot = styled.div`
display:grid;
grid-template-columns:minmax(0,1fr) 18px;
background:#c3c3c3;
`

const options = [
    ['Whole words only', true],
    ['Match case', false],
    ['Find in substructures', true],
    ['Find in hidden texts', true],
    ['Use wildcards', true],
    ['Use regular expressions', true],
]

const Tasks = () => (
    <TaskPanel>
        <TitleBar>
            Tasks
            <Spacer />
            <WindowGroup>
                <Icon name="restore" />
                <Icon name="columns" />
                <Icon name="triRight" />
            </WindowGroup>
        </TitleBar>
        <OptionsHead>Options</OptionsHead>
        <PanelTools $pad={5}>
            <Spacer />
            <IconButton name="pane" label="Change view" />
        </PanelTools>
        <SectionHead $ruled $h={23}>
            <SectionMark><Chevron dir="down" /></SectionMark>
            Find and repla...
        </SectionHead>
        <TaskBody>
            <TaskClip>
                <FindForm onSubmit={e => e.preventDefault()}>
                    <FieldLabel htmlFor="find">Find:</FieldLabel>
                    <TextField id="find" />
                    <ChoiceGroup>
                        {options.map(([text, off]) => (
                            <Choice key={text} $off={off}>
                                <Check type="checkbox" disabled={off} />
                                {text}
                            </Choice>
                        ))}
                    </ChoiceGroup>
                    <ChoiceGroup $spaced>
                        <Choice><Radio type="radio" name="dir" defaultChecked />Down</Choice>
                        <Choice><Radio type="radio" name="dir" />Up</Choice>
                    </ChoiceGroup>
                    <FormButton disabled>Find</FormButton>
                    <ReplaceLabel htmlFor="replace">Replace with:</ReplaceLabel>
                    <TextField id="replace" />
                    <ChoiceGroup>
                        <Choice $off><Radio type="radio" name="scope" disabled defaultChecked />Whole document</Choice>
                        <Choice $off><Radio type="radio" name="scope" disabled />From current position</Choice>
                        <Choice $off><Radio type="radio" name="scope" disabled />Selection</Choice>
                    </ChoiceGroup>
                    <ButtonRow>
                        <FormButton $grow disabled>Replace</FormButton>
                        <FormButton $grow disabled>Replace all</FormButton>
                    </ButtonRow>
                </FindForm>
            </TaskClip>
            <Scrollbar thumb={98} label="Find options" />
        </TaskBody>
        <TaskFoot>
            <Scrollbar horizontal thumb={57} label="Find width" />
        </TaskFoot>
        <SectionHead $ruled $h={24}>
            <SectionMark><Chevron dir="down" /></SectionMark>
            Languages &amp; r...
        </SectionHead>
        <TaskBody $short>
            <LanguageText>Editing language:</LanguageText>
            <Scrollbar thumb={0} label="Languages" />
        </TaskBody>
        <TaskFoot>
            <Scrollbar horizontal thumb={52} label="Language width" />
        </TaskFoot>
    </TaskPanel>
)

// bottom status bar
const StatusBar = styled.footer`
display:flex;
align-items:center;
gap:3px;
height:28px;
flex-shrink:0;
background:#1c1c1c;
color:#fff;
`
const PortalButton = styled(PlainButton)`
width:178px;
padding:2px 0 0 31px;
gap:6px;
font-family:${headingFont};
font-size:13px;
font-weight:700;
`
const OpenEditor = styled.button`
display:flex;
align-items:center;
gap:5px;
width:113px;
height:20px;
padding:0 3px;
border:none;
background:${p => (p.$active ? '#fff' : '#c3c3c3')};
color:${p => (p.$active ? '#111' : '#333')};
`
const Connection = styled.span`
display:flex;
align-items:center;
gap:5px;
height:28px;
margin-left:3px;
padding:2px 0 0 3px;
border-left:1px solid #666;
white-space:nowrap;
`
const Activity = styled.svg`
margin:0 37px 0 22px;
`

const StepMark = () => (
    <svg width="7" height="12" viewBox="0 0 7 12">
        <path d="M0 5h7M3.500 2v6M0 10.500h7" stroke="#727272" strokeWidth="1.500" />
    </svg>
)

const App = () => {
    return (
        <Page>
            <GlobalStyle />
            <Header>
                <div>
                    <Menu>
                        {['Project', 'Edit', 'View', 'Insert', 'Online', 'Options', 'Tools', 'Window', 'Help'].map(m => (
                            <PlainButton key={m}>{m}</PlainButton>
                        ))}
                    </Menu>
                    <Toolbar>
                        <IconButton name="newProject" label="New project" />
                        <IconButton name="openProject" label="Open project" />
                        <SaveButton><Icon name="save" />Save project</SaveButton>
                        <IconButton name="print" />
                        <Split />
                        <IconButton name="cut" />
                        <IconButton name="copy" />
                        <IconButton name="paste" />
                        <IconButton name="cross" label="Delete" />
                        <Split />
                        <PlainButton aria-label="Undo"><Icon name="undo" /><StepMark /></PlainButton>
                        <PlainButton aria-label="Redo"><Icon name="redo" /><StepMark /></PlainButton>
                        <Split />
                        <IconButton name="compile" />
                        <IconButton name="download" />
                        <IconButton name="upload" />
                        <IconButton name="simulate" />
                        <IconButton name="runtime" />
                        <Split />
                        <PlainButton $muted><Icon name="plugOff" />Go online</PlainButton>
                        <PlainButton><Icon name="plug" />Go offline</PlainButton>
                        <Split />
                        <IconButton name="access" label="Accessible devices" />
                        <IconButton name="startCpu" label="Start CPU" />
                        <IconButton name="stopCpu" label="Stop CPU" />
                        <Split />
                        <IconButton name="crossRef" label="Cross-references" />
                        <Split />
                        <IconButton name="splitH" label="Split horizontally" />
                        <IconButton name="splitV" label="Split vertically" />
                        <Split />
                        <SearchBox aria-label="Search in project" placeholder="<Search in project>" />
                        <IconButton name="searchProject" label="Search" />
                    </Toolbar>
                </div>
                <Brand>
                    <BrandName>Totally Integrated Automation</BrandName>
                    <BrandSub>PORTAL</BrandSub>
                </Brand>
            </Header>
            <Workspace>
                <LeftRail><LeftRailTab>PLC programming</LeftRailTab></LeftRail>
                <ProjectTree />
                <Gutter />
                <Editor />
                <Gutter />
                <Tasks />
                <RightRail>
                    <RailTab $active $h={79}><Icon name="taskTab" />Tasks</RailTab>
                    <RailTab $h={100}><Icon name="book" />Libraries</RailTab>
                </RightRail>
            </Workspace>
            <StatusBar>
                <PortalButton><Icon name="triLeft" />Portal view</PortalButton>
                <OpenEditor><Icon name="overview" />Overview</OpenEditor>
                <OpenEditor><Icon name="ob" />Main (OB1)</OpenEditor>
                <OpenEditor $active><Icon name="allTags" />PLC tags</OpenEditor>
                <Spacer />
                <Icon name="netStatus" size={20} />
                <Connection>
                    <Icon name="okBlue" />
                    Connected to PLC_Libcode.net, via add...
                </Connection>
                <Activity width="28" height="12" viewBox="0 0 28 12">
                    <path d="M1.500 0v12M9.500 0v12M13.500 0v12M17.500 0v12M21.500 0v12M25.500 0v12" stroke="#e8501c" strokeWidth="3" />
                    <path d="M5.500 0v12" stroke="#fff" strokeWidth="3" />
                </Activity>
            </StatusBar>
        </Page>
    )
}

export default App
